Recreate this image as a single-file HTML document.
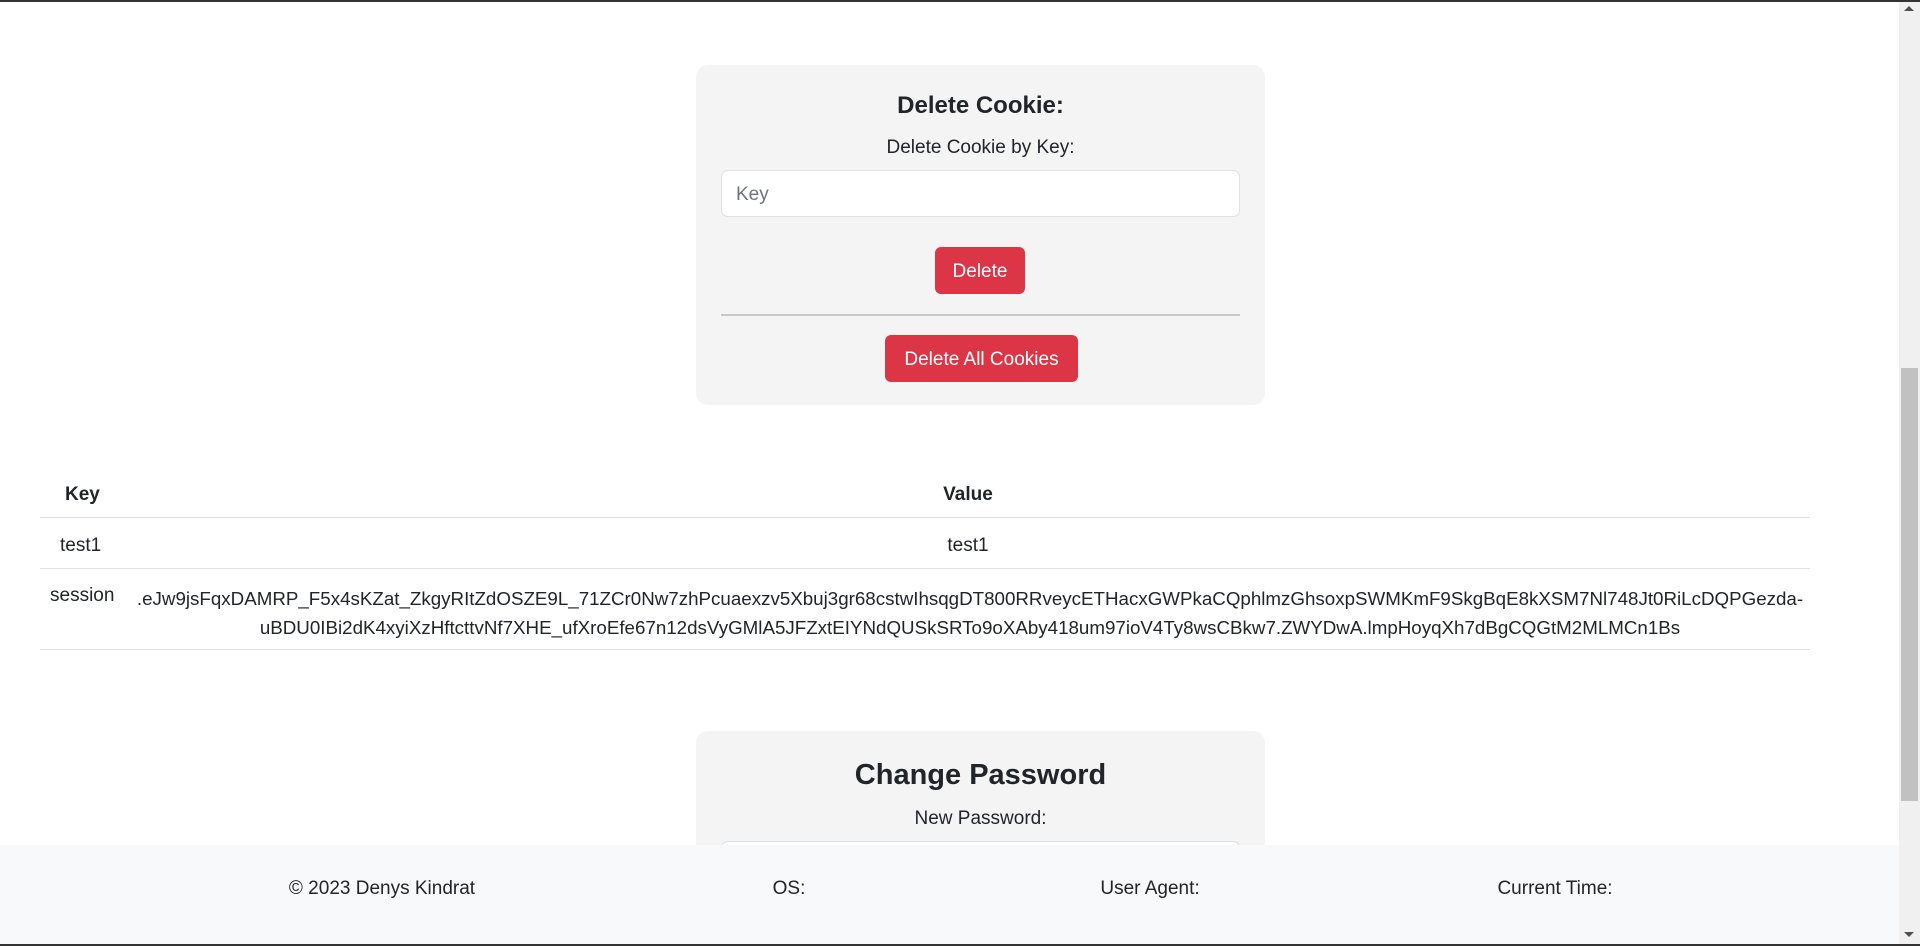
<!DOCTYPE html>
<html><head><meta charset="utf-8"><style>
*{box-sizing:border-box;margin:0;padding:0}
body{width:1920px;height:946px;overflow:hidden;background:#fff;font-family:"Liberation Sans",sans-serif;color:#212529;font-size:19px;position:relative}
.a{position:absolute}
.c{text-align:center}
.card{background:#f4f4f4;border-radius:12px}
.inp{background:#fff;border:1px solid #dee2e6;border-radius:7px;color:#6c757d;padding-left:14px;padding-top:3px;display:flex;align-items:center}
.btn{background:#dc3545;color:#fff;border-radius:6px;display:flex;align-items:center;justify-content:center;padding-top:3px}
.line{height:1px;background:#dee2e6}
</style></head><body>
<div class="a" style="left:0;top:0;width:1920px;height:2px;background:#333"></div>
<div class="a card" style="left:696px;top:65px;width:569px;height:340px"></div>
<div class="a c" style="left:696px;top:92px;width:569px;font-size:24px;font-weight:bold">Delete Cookie:</div>
<div class="a c" style="left:696px;top:137px;width:569px">Delete Cookie by Key:</div>
<div class="a inp" style="left:721px;top:170px;width:519px;height:47px">Key</div>
<div class="a btn" style="left:935px;top:247px;width:90px;height:47px">Delete</div>
<div class="a" style="left:721px;top:314px;width:519px;height:2px;background:#c8c8c8"></div>
<div class="a btn" style="left:885px;top:335px;width:193px;height:47px">Delete All Cookies</div>

<div class="a" style="left:65px;top:484px;font-weight:bold">Key</div>
<div class="a c" style="left:128px;top:484px;width:1680px;font-weight:bold">Value</div>
<div class="a line" style="left:40px;top:517px;width:1770px"></div>
<div class="a" style="left:60px;top:535px">test1</div>
<div class="a c" style="left:128px;top:535px;width:1680px">test1</div>
<div class="a line" style="left:40px;top:568px;width:1770px"></div>
<div class="a" style="left:50px;top:585px">session</div>
<div class="a c" style="left:125px;top:584px;width:1690px;line-height:29px;font-size:18.75px;white-space:nowrap">.eJw9jsFqxDAMRP_F5x4sKZat_ZkgyRItZdOSZE9L_71ZCr0Nw7zhPcuaexzv5Xbuj3gr68cstwIhsqgDT800RRveycETHacxGWPkaCQphlmzGhsoxpSWMKmF9SkgBqE8kXSM7Nl748Jt0RiLcDQPGezda-<br>uBDU0IBi2dK4xyiXzHftcttvNf7XHE_ufXroEfe67n12dsVyGMlA5JFZxtEIYNdQUSkSRTo9oXAby418um97ioV4Ty8wsCBkw7.ZWYDwA.lmpHoyqXh7dBgCQGtM2MLMCn1Bs</div>
<div class="a line" style="left:40px;top:649px;width:1770px"></div>

<div class="a card" style="left:696px;top:731px;width:569px;height:200px"></div>
<div class="a c" style="left:696px;top:759px;width:569px;font-size:29px;font-weight:bold">Change Password</div>
<div class="a c" style="left:696px;top:808px;width:569px">New Password:</div>
<div class="a inp" style="left:721px;top:841px;width:519px;height:47px"></div>

<div class="a" style="left:0;top:845px;width:1899px;height:99px;background:#f8f9fa"></div>
<div class="a c" style="left:232px;top:878px;width:300px">© 2023 Denys Kindrat</div>
<div class="a c" style="left:689px;top:878px;width:200px">OS:</div>
<div class="a c" style="left:1050px;top:878px;width:200px">User Agent:</div>
<div class="a c" style="left:1455px;top:878px;width:200px">Current Time:</div>

<div class="a" style="left:1899px;top:2px;width:21px;height:942px;background:#f0f0f0"></div>
<div class="a" style="left:1901px;top:368px;width:17px;height:433px;background:#c1c1c1"></div>
<div class="a" style="left:1904px;top:6px;width:0;height:0;border-left:5px solid transparent;border-right:5px solid transparent;border-bottom:5px solid #505050"></div>
<div class="a" style="left:1904px;top:932px;width:0;height:0;border-left:5px solid transparent;border-right:5px solid transparent;border-top:5px solid #505050"></div>
<div class="a" style="left:0;top:944px;width:1920px;height:2px;background:#333"></div>
</body></html>
